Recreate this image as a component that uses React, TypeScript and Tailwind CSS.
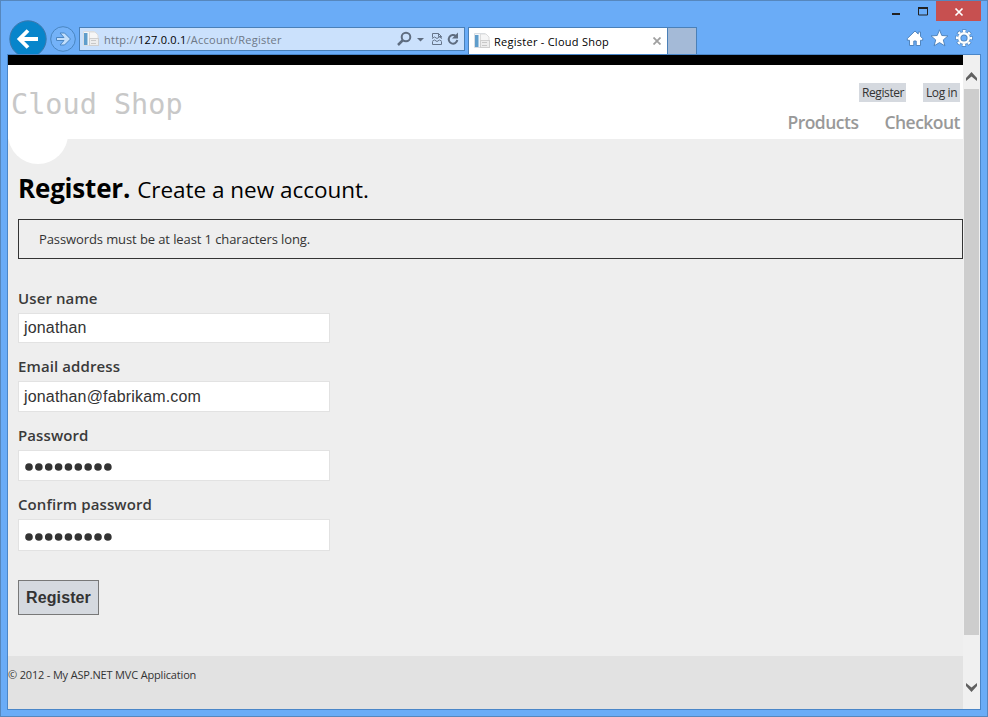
import React from "react";

const ui = "font-['Open_Sans','Noto_Sans',sans-serif]";

function PageIcon() {
  return (
    <svg width="16" height="16" viewBox="0 0 16 16" className="block shrink-0">
      <path d="M.5.500H11l3 3V14.500H.5z" fill="#f4f6f8" stroke="#d8dde3" />
      <rect x="1" y="2" width="3" height="12" fill="#5f9dcb" />
      <rect x="4" y="2" width="1" height="12" fill="#a9cbe4" />
      <path d="M6.500 1h5.500l3 3v4H6.500z" fill="#f6f6f6" stroke="#dcdcdc" />
      <rect x="6.500" y="7.500" width="9" height="7" fill="#ededed" stroke="#cfcfcf" />
      <path d="M8 9.500h5M8 12.500h5" stroke="#c8c8c8" />
    </svg>
  );
}

function Toolbar() {
  return (
    <div className="flex h-[34px] items-start">
      <svg width="38" height="34" viewBox="0 0 38 34" className="ml-[8px] block shrink-0">
        <circle cx="19" cy="19" r="18.2" fill="#0785cb" stroke="#3d78ac" />
        <path d="M29 19H12M19 10.500L10.500 19l8.500 8.500" fill="none" stroke="#fff" strokeWidth="3.800" />
      </svg>
      <svg width="26" height="26" viewBox="0 0 26 26" className="ml-[3px] mt-[6px] block shrink-0">
        <circle cx="13" cy="13" r="12.3" fill="#74b2f8" stroke="#4a86c1" />
        <path d="M6.500 11.500h7.500l-4-4.500h4.500l6 6-6 6H10l4-4.500H6.500z" fill="#c2defb" stroke="#4b86c3" strokeWidth="1" />
      </svg>
      <div className="ml-[3px] mt-[7px] flex h-[24px] w-[386px] shrink-0 items-center border border-[#4a80b8] bg-[#cbe1fc] pl-[3px]">
        <PageIcon />
        <span className={`${ui} ml-[5px] w-[293px] whitespace-nowrap pt-[2px] text-[11px] tracking-[0.240px] text-[#6e7886]`}>
          http://<span className="text-black">127.0.0.1</span>/Account/Register
        </span>
        <svg width="66" height="20" viewBox="0 0 66 20" className="block shrink-0">
          <circle cx="9" cy="8" r="4.300" fill="none" stroke="#5f6d80" strokeWidth="2" />
          <path d="M6 11L1 16" stroke="#5f6d80" strokeWidth="2.500" />
          <path d="M20 9h7l-3.500 3.500z" fill="#5f6d80" />
          <path d="M35.500 8.500V4.500h6l3 3v1M35.500 13v2.500h9V13M41.500 4.500v3h3" fill="none" stroke="#66758a" />
          <path d="M35 9.500l2.500-1.500 2.500 1.500 2.500-1.500 2.500 1.500M35 12.500l2.500-1.500 2.500 1.500 2.500-1.500 2.500 1.500" fill="none" stroke="#66758a" />
          <path d="M59 7.200A4.300 4.300 0 1 0 60.300 11" fill="none" stroke="#5f6d80" strokeWidth="2" />
          <path d="M61 3.500v6h-6z" fill="#5f6d80" />
        </svg>
      </div>
      <div className="ml-[3px] mt-[7px] flex h-[27px] w-[200px] shrink-0 items-center border border-b-0 border-[#4a80b8] bg-white pl-[5px]">
        <PageIcon />
        <span className={`${ui} ml-[4px] w-[159px] whitespace-nowrap pt-[2px] text-[11px] tracking-[0.260px] text-black`}>Register - Cloud Shop</span>
        <svg width="8" height="8" viewBox="0 0 8 8" className="block shrink-0">
          <path d="M.5.5l7 7M7.500.5l-7 7" stroke="#a0a0a0" strokeWidth="1.8" />
        </svg>
      </div>
      <div className="mt-[7px] h-[27px] w-[29px] shrink-0 border border-b-0 border-l-0 border-[#4a80b8] bg-[#a4bad7]" />
      <svg width="68" height="20" viewBox="0 0 68 20" className="ml-[209px] mt-[9px] block shrink-0">
        <path d="M9 2L1.300 9.500v1.800H3.500v5.200h4.300V12h2.400v4.500h4.300v-5.200h2.200V9.500L14.500 7.300V3h-2.300v2z" fill="#fff" stroke="#5085be" />
        <path d="M33.500.8l2.300 5.700 6.200.4-4.700 4 1.600 6-5.400-3.300-5.400 3.300 1.600-6-4.700-4 6.200-.4z" fill="#fff" stroke="#5085be" />
        <g fill="none">
          <circle cx="58" cy="9" r="7" stroke="#5085be" strokeWidth="3.600" strokeDasharray="3.700 1.798" strokeDashoffset="1.850" />
          <circle cx="58" cy="9" r="4.600" stroke="#5085be" strokeWidth="4" />
          <circle cx="58" cy="9" r="7" stroke="#fff" strokeWidth="2.200" strokeDasharray="2.700 2.798" strokeDashoffset="1.350" />
          <circle cx="58" cy="9" r="4.800" stroke="#fff" strokeWidth="2.400" />
        </g>
      </svg>
    </div>
  );
}

function Field({ label, value, secret, h, gap }: { label: string; value?: string; secret?: boolean; h: string; gap: string }) {
  return (
    <div className={gap}>
      <div className={`${ui} h-[24px] whitespace-nowrap text-[15px] font-semibold leading-[18px] tracking-[0.100px] text-[#3a3a3a]`}>{label}</div>
      <div className={`flex w-[312px] items-center border border-[#e2e2e2] bg-white pl-[5px] ${h}`}>
        {secret ? (
          <svg width="90" height="8" viewBox="0 0 90 8" className="mt-[3px] block">
            {Array.from({ length: 9 }, (_, i) => (
              <circle key={i} cx={5 + i * 9.86} cy="4" r="3.800" fill="#333" />
            ))}
          </svg>
        ) : (
          <span className="font-['Liberation_Sans',sans-serif] text-[16px] leading-[20px] tracking-[0.160px] text-[#333]">{value}</span>
        )}
      </div>
    </div>
  );
}

export default function App() {
  return (
    <div className={`${ui} flex h-[717px] w-[988px] flex-col overflow-hidden border border-[#5687bd] bg-[#6aacf7]`}>
      <div className="flex h-[19px] shrink-0 items-start justify-end pr-[6px]">
        <svg width="37" height="19" viewBox="0 0 37 19" className="mr-[7px] block shrink-0">
          <rect x="0" y="12" width="8" height="2" fill="#222" />
          <path d="M26.500 7v7h9V7" fill="none" stroke="#222" />
          <rect x="26" y="6" width="10" height="2" fill="#222" />
        </svg>
        <svg width="45" height="20" viewBox="0 0 45 20" className="block shrink-0">
          <rect width="45" height="20" fill="#c75050" />
          <path d="M19.500 7.500l7 7M26.500 7.500l-7 7" stroke="#fff" strokeWidth="1.700" />
        </svg>
      </div>
      <Toolbar />
      <div className="ml-[6px] flex h-[656px] w-[974px] shrink-0 border border-[#4a86c8]">
        <div className="flex w-[955px] flex-col bg-[#eeeeee]">
          <header className="h-[84px] shrink-0 border-t-[10px] border-black bg-white">
            <div className="flex justify-between pr-[3px]">
              <div className="pl-[3px] pt-[23px] font-['DejaVu_Sans_Mono',monospace] text-[28.500px] leading-[34px] text-[#c8c8c8]">Cloud Shop</div>
              <div className="flex flex-col items-end pt-[18px]">
                <div className="flex gap-[17px] whitespace-nowrap text-[12px] leading-[19px] text-[#333]">
                  <span className="h-[19px] w-[47px] bg-[#d5d9df] pl-[3px] tracking-[-0.400px]">Register</span>
                  <span className="h-[19px] w-[37px] bg-[#d5d9df] pl-[3px] tracking-[-0.400px]">Log in</span>
                </div>
                <div className="mt-[7px] flex gap-[26px] whitespace-nowrap text-[17.500px] font-semibold leading-[26px] text-[#999]">
                  <span className="tracking-[-0.520px]">Products</span>
                  <span className="tracking-[-0.520px]">Checkout</span>
                </div>
              </div>
            </div>
          </header>
          <main className="flex h-[517px] shrink-0 flex-col">
            <div className="h-[25px] w-[60px] shrink-0 overflow-hidden">
              <div className="-mt-[35px] size-[60px] rounded-full bg-white" />
            </div>
            <div className="flex flex-1 flex-col pl-[10px]">
              <h1 className="flex h-[55px] items-baseline gap-[7px] whitespace-nowrap pt-[6px] leading-[36px] text-black">
                <span className="text-[26px] font-bold tracking-[-0.200px]">Register.</span>
                <span className="text-[22.500px] tracking-[-0.020px]">Create a new account.</span>
              </h1>
              <div className="h-[40px] shrink-0 border border-[#333] pl-[20px] text-[13px] leading-[38px] tracking-[-0.100px] text-[#333]">
                Passwords must be at least 1 characters long.
              </div>
              <Field label="User name" value="jonathan" h="h-[30px]" gap="mt-[30px]" />
              <Field label="Email address" value="jonathan@fabrikam.com" h="h-[31px]" gap="mt-[14px]" />
              <Field label="Password" secret h="h-[31px]" gap="mt-[14px]" />
              <Field label="Confirm password" secret h="h-[32px]" gap="mt-[14px]" />
              <button className="mt-[29px] h-[35px] w-[81px] border border-[#787878] bg-[#d5d9df] font-['Liberation_Sans',sans-serif] text-[16px] font-bold tracking-[0.100px] text-[#333]">Register</button>
            </div>
          </main>
          <footer className="flex-1 bg-[#e2e2e2] pt-[10px] text-[11px] leading-[18px] tracking-[-0.170px] text-[#333]">© 2012 - My ASP.NET MVC Application</footer>
        </div>
        <div className="flex flex-1 flex-col items-center bg-[#f0f0f0]">
          <svg width="17" height="34" viewBox="0 0 17 34" className="block shrink-0">
            <path d="M3 26V23l5.500-6L14 23v3l-5.500-4.500z" fill="#606060" />
          </svg>
          <div className="h-[546px] w-[15px] shrink-0 bg-[#cdcdcd]" />
          <svg width="17" height="74" viewBox="0 0 17 74" className="block shrink-0">
            <path d="M3 48v3l5.500 6 5.500-6v-3l-5.500 4.500z" fill="#606060" />
          </svg>
        </div>
      </div>
    </div>
  );
}
